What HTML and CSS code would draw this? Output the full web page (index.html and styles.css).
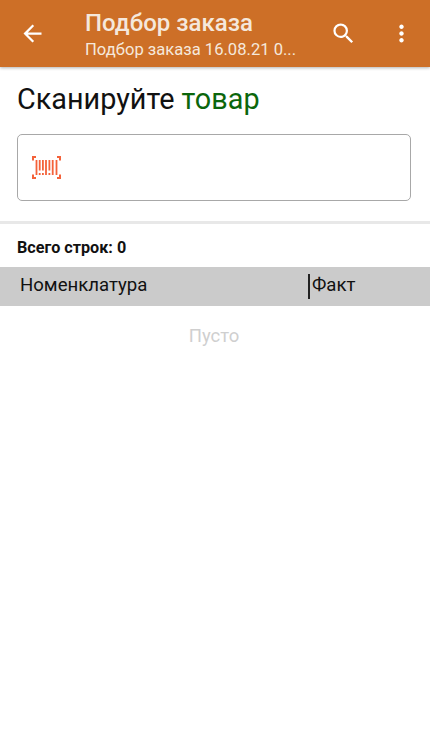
FILE: index.html
```html
<!DOCTYPE html>
<html lang="ru">
<head>
  <meta charset="UTF-8" />
  <meta name="viewport" content="width=device-width, initial-scale=1.0" />
  <title>Подбор заказа</title>
  <link rel="stylesheet" href="styles.css">
</head>
<body>
  <div class="toolbar">
    <button class="tool-button back-button">
      <svg viewBox="0 0 24 24"><path d="M20 11H7.83l5.59-5.59L12 4l-8 8 8 8 1.41-1.41L7.83 13H20v-2z"/></svg>
    </button>
    <div class="toolbar-titles">
      <div class="toolbar-title">Подбор заказа</div>
      <div class="toolbar-subtitle">Подбор заказа 16.08.21 0...</div>
    </div>
    <button class="tool-button search-button">
      <svg viewBox="0 0 24 24"><path d="M15.5 14h-.79l-.28-.27A6.47 6.47 0 0 0 16 9.5 6.5 6.5 0 1 0 9.5 16c1.61 0 3.09-.59 4.23-1.57l.27.28v.79l5 4.99L20.49 19l-4.99-5zm-6 0C7.01 14 5 11.99 5 9.5S7.01 5 9.5 5 14 7.01 14 9.5 11.99 14 9.5 14z"/></svg>
    </button>
    <button class="tool-button more-button">
      <svg viewBox="0 0 24 24"><path d="M12 8c1.1 0 2-.9 2-2s-.9-2-2-2-2 .9-2 2 .9 2 2 2zm0 2c-1.1 0-2 .9-2 2s.9 2 2 2 2-.9 2-2-.9-2-2-2zm0 6c-1.1 0-2 .9-2 2s.9 2 2 2 2-.9 2-2-.9-2-2-2z"/></svg>
    </button>
  </div>

  <div class="prompt">Сканируйте <span class="prompt-accent">товар</span></div>

  <div class="scan-box">
    <svg class="scan-icon" viewBox="0 0 29 23" fill="none" stroke="#f4623a">
      <path stroke-width="2" d="M4 1H1v3.5M25 1h3v3.5M4 22H1v-3.5M25 22h3v-3.5"/>
      <path stroke-width="1.8" d="M4.5 4v15M24.5 4v15M14 4v15M20.7 4v15"/>
      <path stroke-width="1.8" d="M7.7 4v10.5M10.9 4v10.5M17.4 4v10.5"/>
      <path stroke-width="1.8" d="M7.7 17v2M10.9 17v2M17.4 17v2"/>
    </svg>
  </div>

  <div class="divider"></div>

  <div class="total">Всего строк: 0</div>

  <div class="table-head">
    <div class="col-name">Номенклатура</div>
    <div class="col-fact">Факт</div>
  </div>

  <div class="empty">Пусто</div>
</body>
</html>
```

FILE: styles.css
```css
* { margin: 0; padding: 0; box-sizing: border-box; }
body {
  font-family: Roboto, 'Liberation Sans', sans-serif;
  background: #fff;
  color: #111;
  height: 739px;
  overflow: hidden;
}
.toolbar {
  height: 67px;
  background: #cd6f27;
  display: flex;
  align-items: center;
  color: #fff;
  box-shadow: 0 1px 3px rgba(0, 0, 0, 0.3);
}
.tool-button {
  background: none;
  border: none;
  display: flex;
  align-items: center;
  justify-content: center;
}
.tool-button svg {
  fill: #fff;
  width: 27px;
  height: 27px;
}
.back-button {
  width: 64px;
  height: 67px;
  margin-right: 21px;
}
.toolbar-titles {
  flex: 1;
  min-width: 0;
}
.toolbar-title {
  font-size: 24px;
  font-weight: 500;
  line-height: 31px;
  color: #f5e8dc;
}
.toolbar-subtitle {
  font-size: 16.6px;
  line-height: 21px;
  color: #f5e8dc;
  white-space: nowrap;
}
.search-button {
  width: 58px;
  height: 67px;
}
.more-button {
  width: 58px;
  height: 67px;
}
.prompt {
  font-size: 28.8px;
  line-height: 34px;
  padding: 15px 17px 0;
  color: #111;
}
.prompt-accent {
  color: #0b660b;
}
.scan-box {
  height: 67px;
  margin: 18px 19px 0 17px;
  border: 1px solid #a8a8a8;
  border-radius: 5px;
  display: flex;
  align-items: center;
  padding-left: 14px;
}
.scan-icon {
  width: 29px;
  height: 23px;
}
.divider {
  height: 3px;
  background: #e8e8e8;
  margin-top: 20px;
}
.total {
  font-size: 16.2px;
  font-weight: 700;
  line-height: 20px;
  padding: 14px 17px 0;
}
.table-head {
  height: 39px;
  margin-top: 9px;
  background: #cbcbcb;
  display: flex;
  align-items: center;
  font-size: 18.6px;
}
.col-name {
  width: 308px;
  padding-left: 20px;
  line-height: 23px;
  height: 25px;
}
.col-fact {
  border-left: 2px solid #222;
  height: 25px;
  line-height: 23px;
  padding-left: 2px;
}
.empty {
  text-align: center;
  font-size: 18.5px;
  line-height: 24px;
  margin-top: 18px;
  color: #cfcfcf;
  padding-right: 2px;
}
```
